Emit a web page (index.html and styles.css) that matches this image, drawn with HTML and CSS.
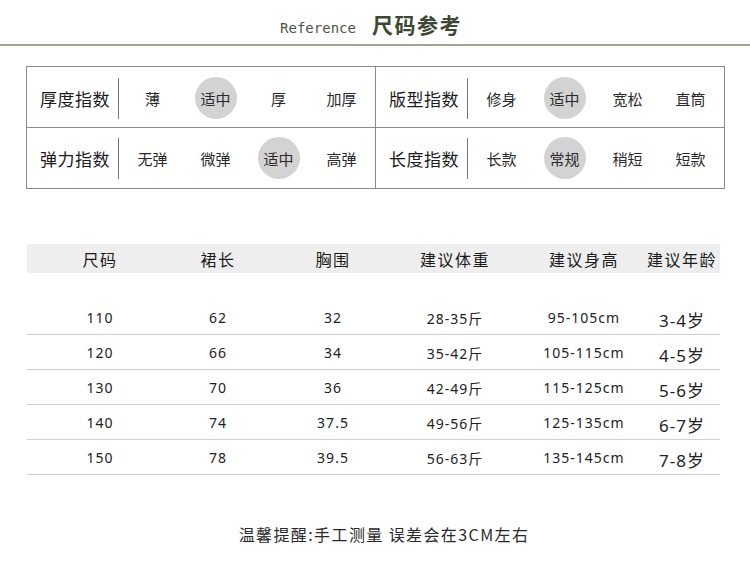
FILE: index.html
```html
<!DOCTYPE html>
<html lang="zh">
<head>
<meta charset="utf-8">
<title>尺码参考</title>
<link rel="stylesheet" href="styles.css">
</head>
<body>
<header class="title">
  <span class="title-en">Reference</span>
  <span class="title-cn">尺码参考</span>
</header>

<section class="index-box">
  <div class="cell top left">
    <div class="label">厚度指数</div><div class="sep"></div>
    <div class="opt">薄</div><div class="opt"><span class="on">适中</span></div><div class="opt">厚</div><div class="opt">加厚</div>
  </div>
  <div class="cell top">
    <div class="label">版型指数</div><div class="sep"></div>
    <div class="opt">修身</div><div class="opt"><span class="on">适中</span></div><div class="opt">宽松</div><div class="opt">直筒</div>
  </div>
  <div class="cell left">
    <div class="label">弹力指数</div><div class="sep"></div>
    <div class="opt">无弹</div><div class="opt">微弹</div><div class="opt"><span class="on">适中</span></div><div class="opt">高弹</div>
  </div>
  <div class="cell">
    <div class="label">长度指数</div><div class="sep"></div>
    <div class="opt">长款</div><div class="opt"><span class="on">常规</span></div><div class="opt">稍短</div><div class="opt">短款</div>
  </div>
</section>

<section class="size-table">
  <div class="row head">
    <div class="c">尺码</div><div class="c">裙长</div><div class="c">胸围</div><div class="c">建议体重</div><div class="c">建议身高</div><div class="c">建议年龄</div>
  </div>
  <div class="body">
    <div class="row data"><div class="c">110</div><div class="c">62</div><div class="c">32</div><div class="c">28-35斤</div><div class="c">95-105cm</div><div class="c age">3-4岁</div></div>
    <div class="row data"><div class="c">120</div><div class="c">66</div><div class="c">34</div><div class="c">35-42斤</div><div class="c">105-115cm</div><div class="c age">4-5岁</div></div>
    <div class="row data"><div class="c">130</div><div class="c">70</div><div class="c">36</div><div class="c">42-49斤</div><div class="c">115-125cm</div><div class="c age">5-6岁</div></div>
    <div class="row data"><div class="c">140</div><div class="c">74</div><div class="c">37.5</div><div class="c">49-56斤</div><div class="c">125-135cm</div><div class="c age">6-7岁</div></div>
    <div class="row data"><div class="c">150</div><div class="c">78</div><div class="c">39.5</div><div class="c">56-63斤</div><div class="c">135-145cm</div><div class="c age">7-8岁</div></div>
  </div>
</section>

<footer class="note">温馨提醒:手工测量 误差会在3CM左右</footer>
</body>
</html>
```

FILE: styles.css
```css
* { box-sizing: border-box; }
html, body { margin: 0; padding: 0; background: #ffffff; }
body {
  width: 750px;
  font-family: "Noto Sans", "Noto Sans CJK SC", sans-serif;
  color: #222222;
}

.title {
  height: 46px;
  padding-top: 12px;
  padding-right: 8px;
  display: flex;
  justify-content: center;
  align-items: baseline;
  gap: 16px;
  border-bottom: 2px solid #a3a38f;
}
.title-en {
  font-family: "DejaVu Sans Mono", "Liberation Mono", monospace;
  font-size: 14px;
  color: #4a5740;
  line-height: 20px;
}
.title-cn {
  font-family: "Noto Sans CJK SC", sans-serif;
  font-size: 21px;
  font-weight: 700;
  color: #3b4832;
  letter-spacing: 1.5px;
  line-height: 24px;
}

.index-box {
  margin: 20px 0 0 26px;
  width: 699px;
  border: 1px solid #8a8a8a;
  display: grid;
  grid-template-columns: 349px 348px;
}
.cell {
  height: 61px;
  display: flex;
  align-items: center;
  padding-left: 13px;
  padding-top: 2px;
}
.cell.top { border-bottom: 1px solid #8a8a8a; }
.cell.left { border-right: 1px solid #8a8a8a; }
.cell:not(.top) { height: 60px; padding-top: 0; }
.label {
  width: 78px;
  font-family: "Noto Sans CJK SC", sans-serif;
  font-size: 17px;
  letter-spacing: 0.5px;
  color: #1a1a1a;
}
.sep {
  width: 1px;
  height: 41px;
  background: #777;
  margin-right: 2px;
}
.opt {
  width: 63px;
  display: flex;
  justify-content: center;
  align-items: center;
  font-family: "Noto Sans CJK SC", sans-serif;
  font-size: 15px;
  color: #2a2a2a;
}
.on {
  width: 42px;
  height: 42px;
  border-radius: 50%;
  background: #d3d3d3;
  display: flex;
  justify-content: center;
  align-items: center;
}

.size-table {
  margin: 55px 0 0 27px;
  width: 693px;
}
.row {
  display: grid;
  grid-template-columns: 146px 90px 140px 104px 154px 42px;
}
.row .c {
  display: flex;
  justify-content: center;
  align-items: center;
  white-space: nowrap;
}
.head {
  height: 29px;
  background: #eeeeee;
  font-family: "Noto Sans CJK SC", sans-serif;
  font-size: 16px;
  letter-spacing: 1.5px;
  color: #1a1a1a;
}
.body { padding-top: 27px; }
.data {
  height: 35px;
  border-bottom: 1px solid #cfcfcf;
  font-family: "Noto Sans", "Noto Sans CJK SC", sans-serif;
  font-size: 14px;
  letter-spacing: 1px;
  color: #222;
  padding-top: 1px;
}
.data .age {
  font-size: 17px;
  letter-spacing: 1px;
  padding-top: 3px;
}

.note {
  margin-top: 49px;
  padding-left: 18px;
  text-align: center;
  font-family: "Noto Sans CJK SC", sans-serif;
  font-size: 16px;
  line-height: 20px;
  letter-spacing: 1.4px;
  color: #2a2a2a;
}
```
